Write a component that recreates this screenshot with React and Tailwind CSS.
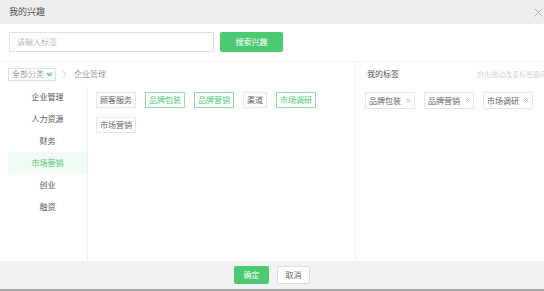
import React from 'react';

const categories = ['企业管理', '人力资源', '财务', '市场营销', '创业', '融资'];

const tags = [
  { name: '顾客服务', on: false },
  { name: '品牌包装', on: true },
  { name: '品牌营销', on: true },
  { name: '渠道', on: false },
  { name: '市场调研', on: true },
  { name: '市场营销', on: false },
];

const myTags = ['品牌包装', '品牌营销', '市场调研'];

const App = () => {
  return (
    <div className="w-[544px] h-[291px] overflow-hidden bg-white flex flex-col font-['Noto_Sans_CJK_SC',sans-serif] text-[#444]">
      {/* Header */}
      <div className="h-[24px] shrink-0 bg-[#eeeeee] flex items-center justify-between pl-[9px] pr-[1px]">
        <span className="text-[9px] text-[#555]">我的兴趣</span>
        <svg width="9" height="9" viewBox="0 0 9 9" className="text-[#aaa]">
          <path d="M0.5 0.5 L8.5 8.5 M8.5 0.5 L0.5 8.5" stroke="currentColor" strokeWidth="0.9" fill="none" />
        </svg>
      </div>

      {/* Search row */}
      <div className="h-[37px] shrink-0 flex items-start pt-[8px] pl-[9px] gap-[6px]">
        <div className="w-[205px] h-[20px] border border-[#e0e0e0] flex items-center pl-[7px]">
          <span className="text-[8px] text-[#999] font-light">请输入标签</span>
        </div>
        <button className="w-[63px] h-[20px] rounded-[2px] bg-[#4cca72] text-white text-[8px] flex items-center justify-center">
          搜索兴趣
        </button>
      </div>

      {/* Main */}
      <div className="flex-1 flex border-t border-[#f0f0f0] min-h-0">
        {/* Left side */}
        <div className="w-[355px] shrink-0 flex flex-col">
          <div className="h-[24px] shrink-0 flex items-center pl-[8px]">
            <div className="h-[13px] border border-[#e0e0e0] flex items-center pl-[3px] pr-[2px] gap-[2px]">
              <span className="text-[8px] text-[#666] font-light">全部分类</span>
              <svg width="7" height="5" viewBox="0 0 7 5">
                <path d="M1 1 L3.5 3.5 L6 1" stroke="#4cca72" strokeWidth="1.3" fill="none" />
              </svg>
            </div>
            <svg width="5" height="9" viewBox="0 0 5 9" className="ml-[6px]">
              <path d="M0.8 0.8 L4 4.5 L0.8 8.2" stroke="#c8c8c8" strokeWidth="0.8" fill="none" />
            </svg>
            <span className="ml-[7px] text-[8px] text-[#666] font-light">企业管理</span>
          </div>

          <div className="flex-1 flex min-h-0">
            {/* Sidebar */}
            <div className="w-[88px] shrink-0 border-r border-[#f0f0f0] pl-[8px]">
              {categories.map((c, i) => (
                <div
                  key={c}
                  className={`h-[22px] flex items-center justify-center text-[8px] ${
                    i === 3 ? 'bg-[#f1faf3] text-[#4cca72]' : 'text-[#555]'
                  }`}
                >
                  {c}
                </div>
              ))}
            </div>

            {/* Tags */}
            <div className="flex-1 flex flex-wrap content-start gap-x-[9px] gap-y-[9px] pl-[8px] pt-[6px] pr-[4px]">
              {tags.map((t) => (
                <div
                  key={t.name}
                  className={`h-[16px] px-[3px] border flex items-center text-[8px] ${
                    t.on ? 'border-[#8fdca7] text-[#4cca72]' : 'border-[#e6e6e6] text-[#666]'
                  }`}
                >
                  {t.name}
                </div>
              ))}
            </div>
          </div>
        </div>

        {/* Right side */}
        <div className="flex-1 border-l border-[#f0f0f0] flex flex-col min-w-0">
          <div className="h-[24px] shrink-0 flex items-center pl-[11px] whitespace-nowrap">
            <span className="text-[8px] text-[#555]">我的标签</span>
            <span className="ml-[78px] text-[7px] text-[#bbb] font-light">自由拖动改变标签顺序</span>
          </div>
          <div className="flex flex-wrap content-start gap-[9px] pl-[9px] pt-[6px]">
            {myTags.map((t) => (
              <div key={t} className="h-[17px] pl-[3px] pr-[3px] border border-[#e6e6e6] flex items-center gap-[5px] text-[8px] text-[#666]">
                <span>{t}</span>
                <svg width="5" height="5" viewBox="0 0 5 5">
                  <path d="M0.5 0.5 L4.5 4.5 M4.5 0.5 L0.5 4.5" stroke="#aaa" strokeWidth="0.8" fill="none" />
                </svg>
              </div>
            ))}
          </div>
        </div>
      </div>

      {/* Footer */}
      <div className="h-[28px] shrink-0 bg-[#f2f2f2] flex items-center justify-center gap-[8px]">
        <button className="w-[35px] h-[18px] rounded-[2px] bg-[#4cca72] text-white text-[8px] flex items-center justify-center">
          确定
        </button>
        <button className="w-[33px] h-[18px] rounded-[2px] bg-white border border-[#dddddd] text-[#666] text-[8px] flex items-center justify-center">
          取消
        </button>
      </div>
      <div className="h-[2px] shrink-0 bg-[#a9a9a9]" />
    </div>
  );
};

export default App;
